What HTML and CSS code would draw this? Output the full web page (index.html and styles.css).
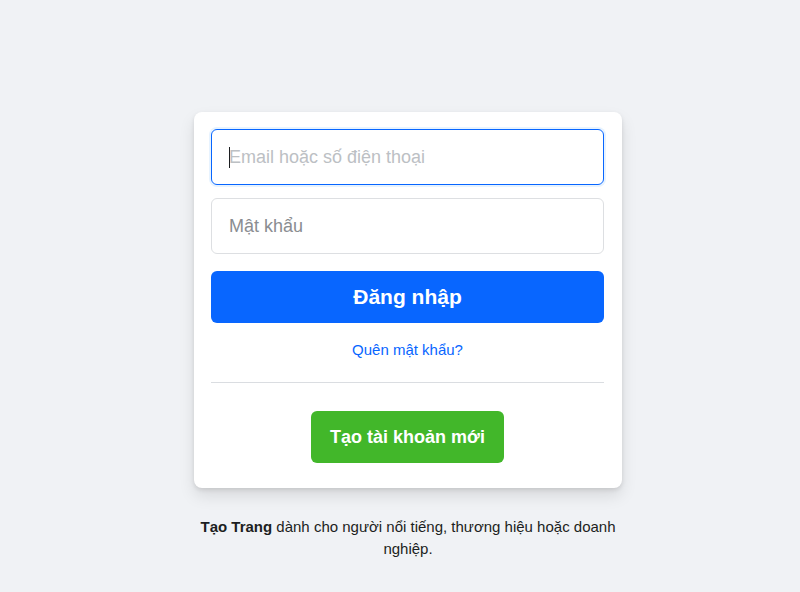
FILE: index.html
```html
<!DOCTYPE html>
<html lang="vi">
<head>
<meta charset="utf-8">
<title>Đăng nhập</title>
<link rel="stylesheet" href="styles.css">
</head>
<body>
<main class="page">
  <div class="login">
    <form class="card">
      <div class="field">
        <input class="input input-focus" type="text" placeholder="Email hoặc số điện thoại">
        <span class="caret"></span>
      </div>
      <div class="field">
        <input class="input" type="password" placeholder="Mật khẩu">
      </div>
      <button class="btn-login" type="button">Đăng nhập</button>
      <a class="forgot" href="#">Quên mật khẩu?</a>
      <div class="divider"></div>
      <div class="create-row">
        <button class="btn-create" type="button">Tạo tài khoản mới</button>
      </div>
    </form>
    <p class="page-note"><b>Tạo Trang</b> dành cho người nổi tiếng, thương hiệu hoặc doanh nghiệp.</p>
  </div>
</main>
</body>
</html>
```
FILE: styles.css
```css
html {
  overflow: hidden;
}
body {
  margin: 8px;
  background: #f0f2f5;
  font-family: "Liberation Sans", Arial, sans-serif;
  color: #1c1e21;
}
.page {
  width: 100vw;
  display: flex;
  justify-content: center;
  padding-top: 104px;
}
.login {
  width: 428px;
  display: flex;
  flex-direction: column;
}
.card {
  box-sizing: border-box;
  background: #fff;
  border-radius: 8px;
  box-shadow: 0 2px 4px rgba(0, 0, 0, 0.1), 0 8px 16px rgba(0, 0, 0, 0.1);
  padding: 17px 18px 25px 17px;
  display: flex;
  flex-direction: column;
}
.field {
  position: relative;
  margin-bottom: 13px;
}
.input {
  box-sizing: border-box;
  display: block;
  width: 100%;
  height: 56px;
  border: 1px solid #dddfe2;
  border-radius: 6px;
  padding: 0 17px;
  font-family: "Liberation Sans", Arial, sans-serif;
  font-size: 18px;
  color: #1c1e21;
  outline: none;
}
.input::placeholder {
  color: #8a8d91;
}
.input-focus {
  border-color: #0866ff;
  box-shadow: 0 0 0 2px #e7f3ff;
}
.input-focus::placeholder {
  color: #bcc0c4;
}
.caret {
  position: absolute;
  left: 18px;
  top: 18px;
  width: 1px;
  height: 21px;
  background: #1c1e21;
}
.btn-login {
  margin-top: 4px;
  height: 52px;
  border: none;
  border-radius: 6px;
  background: #0866ff;
  color: #fff;
  font-family: "Liberation Sans", Arial, sans-serif;
  font-size: 21px;
  font-weight: bold;
}
.forgot {
  margin-top: 17px;
  align-self: center;
  color: #0866ff;
  font-size: 15px;
  line-height: 19px;
  text-decoration: none;
}
.divider {
  margin-top: 23px;
  height: 1px;
  background: #dadde1;
}
.create-row {
  display: flex;
  justify-content: center;
  margin-top: 28px;
}
.btn-create {
  height: 52px;
  padding: 0 19px;
  border: none;
  border-radius: 6px;
  background: #42b72a;
  color: #fff;
  font-family: "Liberation Sans", Arial, sans-serif;
  font-size: 18px;
  font-weight: bold;
}
.page-note {
  margin: 28px 0 0;
  text-align: center;
  font-size: 15px;
  line-height: 22px;
  color: #1c1e21;
}
```
